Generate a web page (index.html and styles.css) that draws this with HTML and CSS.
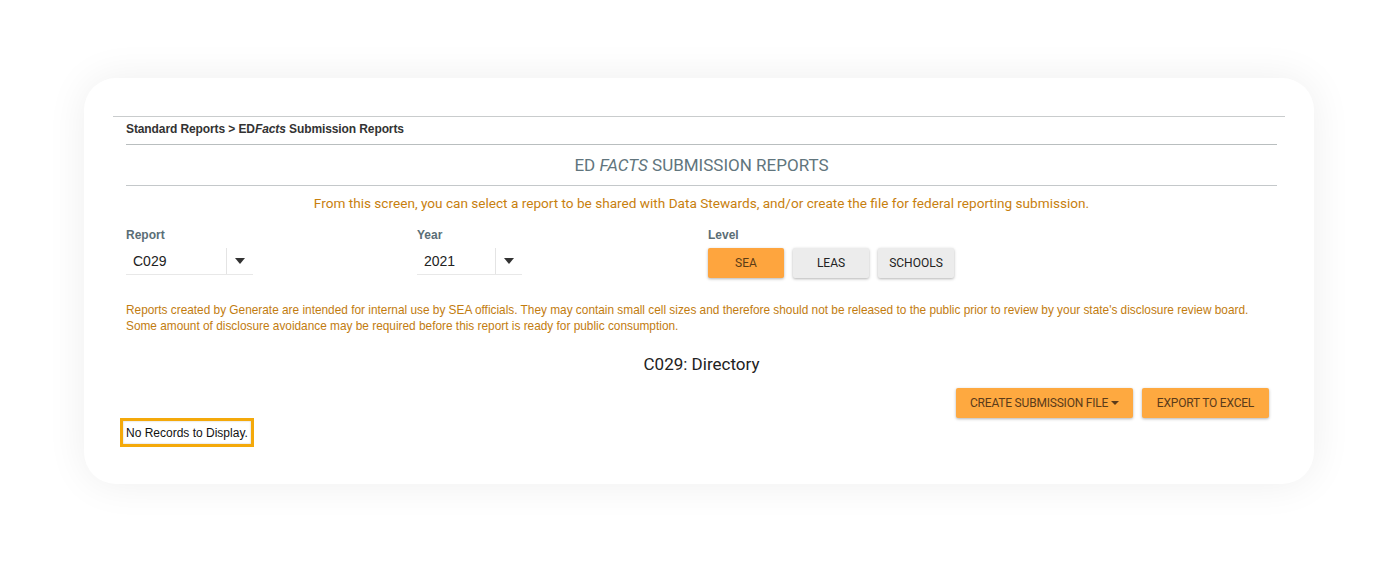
FILE: index.html
```html
<!DOCTYPE html>
<html>
<head>
<meta charset="utf-8">
<link rel="stylesheet" href="styles.css">
</head>
<body>
<div class="card">
  <div class="topline"></div>
  <div class="inner">
    <div class="breadcrumb">Standard Reports &gt; ED<i>Facts</i> Submission Reports</div>
    <div class="title">ED <i>FACTS</i> SUBMISSION REPORTS</div>
    <div class="intro">From this screen, you can select a report to be shared with Data Stewards, and/or create the file for federal reporting submission.</div>
    <div class="form-row">
      <div class="field field-report">
        <div class="label">Report</div>
        <div class="select select-report">
          <span class="value">C029</span>
          <span class="arrow"><span class="caret"></span></span>
        </div>
      </div>
      <div class="field field-year">
        <div class="label">Year</div>
        <div class="select select-year">
          <span class="value">2021</span>
          <span class="arrow"><span class="caret"></span></span>
        </div>
      </div>
      <div class="field field-level">
        <div class="label">Level</div>
        <div class="levels">
          <button class="lvl active">SEA</button>
          <button class="lvl">LEAS</button>
          <button class="lvl">SCHOOLS</button>
        </div>
      </div>
    </div>
    <div class="disclaimer">Reports created by Generate are intended for internal use by SEA officials. They may contain small cell sizes and therefore should not be released to the public prior to review by your state's disclosure review board.<br>Some amount of disclosure avoidance may be required before this report is ready for public consumption.</div>
    <div class="report-name">C029: Directory</div>
    <div class="actions">
      <button class="act act-create">CREATE SUBMISSION FILE <span class="sm-caret"></span></button>
      <button class="act act-export">EXPORT TO EXCEL</button>
    </div>
  </div>
  <div class="norecords">No Records to Display.</div>
</div>
</body>
</html>
```

FILE: styles.css
```css
html, body {
  margin: 0;
  padding: 0;
  background: #ffffff;
}
body {
  padding: 78px 84px;
  font-family: Roboto, "Liberation Sans", Arial, sans-serif;
}
.card {
  width: 1230px;
  height: 406px;
  box-sizing: border-box;
  background: #fff;
  border-radius: 32px;
  box-shadow: 0 0 40px rgba(0, 0, 0, 0.07);
  padding-top: 38px;
  position: relative;
}
.topline {
  margin: 0 29px;
  border-top: 1px solid #c9cccd;
}
.inner {
  padding: 0 37px 0 42px;
}
.breadcrumb {
  font-family: "Liberation Sans", Arial, sans-serif;
  font-weight: bold;
  font-size: 12px;
  color: #333;
  height: 27px;
  line-height: 25px;
  border-bottom: 1px solid #b9bebf;
  letter-spacing: -0.1px;
}
.title {
  height: 40px;
  line-height: 40px;
  text-align: center;
  font-size: 17px;
  color: #61757d;
  border-bottom: 1px solid #c4c8ca;
}
.intro {
  text-align: center;
  font-size: 13.6px;
  color: #c8800e;
  line-height: 18px;
  margin-top: 8px;
}
.form-row {
  display: flex;
  margin-top: 16px;
}
.field-report { width: 291px; }
.field-year { width: 291px; }
.label {
  font-family: "Liberation Sans", Arial, sans-serif;
  font-weight: bold;
  font-size: 12px;
  color: #5a6e76;
  line-height: 14px;
  height: 14px;
}
.select {
  display: flex;
  align-items: center;
  height: 26px;
  margin-top: 6px;
  border-bottom: 1px solid #e8e8e8;
  font-family: "Liberation Sans", Arial, sans-serif;
  font-size: 14px;
  color: #222;
}
.select-report { width: 127px; }
.select-year { width: 105px; }
.select .value {
  flex: 1;
  padding-left: 7px;
}
.select .arrow {
  width: 26px;
  height: 26px;
  border-left: 1px solid #e4e4e4;
  display: flex;
  align-items: center;
  justify-content: center;
}
.caret {
  width: 0;
  height: 0;
  border-left: 5px solid transparent;
  border-right: 5px solid transparent;
  border-top: 6px solid #333;
}
.levels {
  display: flex;
  gap: 9px;
  margin-top: 6px;
}
.lvl {
  width: 76px;
  height: 30px;
  border: none;
  border-radius: 2px;
  font-family: Roboto, Arial, sans-serif;
  font-size: 12px;
  color: #222;
  background: #ececec;
  box-shadow: 0 1px 3px rgba(0, 0, 0, 0.3);
  padding: 0;
}
.lvl.active {
  background: #fea53e;
  color: #5b3c16;
}
.disclaimer {
  font-family: "Liberation Sans", Arial, sans-serif;
  font-size: 11.85px;
  line-height: 16px;
  color: #c27c0f;
  margin-top: 24px;
}
.report-name {
  text-align: center;
  font-size: 17px;
  color: #222;
  margin-top: 20px;
  line-height: 20px;
}
.actions {
  display: flex;
  justify-content: flex-end;
  gap: 9px;
  margin-top: 14px;
  padding-right: 8px;
}
.act {
  height: 30px;
  border: none;
  border-radius: 2px;
  background: #fea940;
  color: #5a3b1a;
  font-family: Roboto, Arial, sans-serif;
  font-size: 12px;
  padding: 0;
  white-space: nowrap;
  letter-spacing: -0.2px;
  box-shadow: 0 1px 3px rgba(0, 0, 0, 0.3);
}
.act-create { width: 177px; }
.act-export { width: 127px; }
.sm-caret {
  display: inline-block;
  vertical-align: middle;
  width: 0;
  height: 0;
  border-left: 4px solid transparent;
  border-right: 4px solid transparent;
  border-top: 4px solid #5a3b1a;
  margin-top: -2px;
}
.norecords {
  display: inline-block;
  margin-left: 36px;
  margin-top: 0;
  border: 3px solid #f4a90a;
  padding: 5px 3px 4px;
  font-family: "Liberation Sans", Arial, sans-serif;
  font-size: 12px;
  color: #111;
  line-height: 14px;
  box-shadow: inset 0 0 2px rgba(0,0,0,0.25);
}
```
